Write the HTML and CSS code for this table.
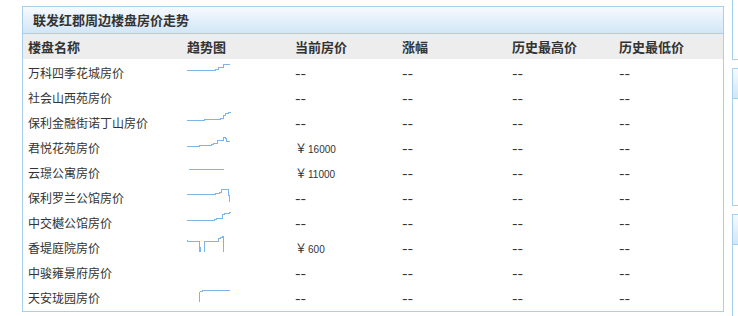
FILE: index.html
```html
<!DOCTYPE html>
<html lang="zh-CN">
<head>
<meta charset="utf-8">
<title>联发红郡周边楼盘房价走势</title>
<link rel="stylesheet" href="styles.css">
</head>
<body>
<div class="page">
  <section class="panel main">
    <div class="panel-head">联发红郡周边楼盘房价走势</div>
    <div class="row thead">
      <div class="c">楼盘名称</div>
      <div class="c">趋势图</div>
      <div class="c">当前房价</div>
      <div class="c">涨幅</div>
      <div class="c">历史最高价</div>
      <div class="c">历史最低价</div>
    </div>

    <div class="row">
      <div class="c">万科四季花城房价</div>
      <div class="spark"><svg width="46" height="25" viewBox="0 0 46 25"><polyline points="1,11.5 29,11.5 29,10.5 32,10.5 32,8.5 37.5,8.5 37.5,5.5 44,5.5"/></svg></div>
      <div class="c"><span class="dash">--</span></div><div class="c"><span class="dash">--</span></div><div class="c"><span class="dash">--</span></div><div class="c"><span class="dash">--</span></div>
    </div>

    <div class="row">
      <div class="c">社会山西苑房价</div>
      <div class="spark"></div>
      <div class="c"><span class="dash">--</span></div><div class="c"><span class="dash">--</span></div><div class="c"><span class="dash">--</span></div><div class="c"><span class="dash">--</span></div>
    </div>

    <div class="row">
      <div class="c">保利金融街诺丁山房价</div>
      <div class="spark"><svg width="46" height="25" viewBox="0 0 46 25"><polyline points="1,11.5 18,11.5 18,10.5 34,10.5 34,9.5 37,9.5 37,6.5 39,6.5 39,4.5 42,4.5 42,3.5 44,3.5 44,2.5"/></svg></div>
      <div class="c"><span class="dash">--</span></div><div class="c"><span class="dash">--</span></div><div class="c"><span class="dash">--</span></div><div class="c"><span class="dash">--</span></div>
    </div>

    <div class="row">
      <div class="c">君悦花苑房价</div>
      <div class="spark"><svg width="46" height="25" viewBox="0 0 46 25"><polyline points="1,12.5 13,12.5 13,11.5 25,11.5 25,10.5 27,10.5 27,9.5 31,9.5 31,6.5 37,6.5 37,3.5 39.5,3.5 39.5,4.5 40.5,4.5 40.5,7.5 44,7.5"/></svg></div>
      <div class="c">￥<span class="num">16000</span></div><div class="c"><span class="dash">--</span></div><div class="c"><span class="dash">--</span></div><div class="c"><span class="dash">--</span></div>
    </div>

    <div class="row">
      <div class="c">云璟公寓房价</div>
      <div class="spark"><svg width="46" height="25" viewBox="0 0 46 25"><polyline points="3,10.5 38,10.5"/></svg></div>
      <div class="c">￥<span class="num">11000</span></div><div class="c"><span class="dash">--</span></div><div class="c"><span class="dash">--</span></div><div class="c"><span class="dash">--</span></div>
    </div>

    <div class="row">
      <div class="c">保利罗兰公馆房价</div>
      <div class="spark"><svg width="46" height="25" viewBox="0 0 46 25"><polyline points="1,10.5 29,10.5 29,9.5 33,9.5 33,8.5 35,8.5 35,5.5 42.5,5.5 42.5,11 43.5,11 43.5,18"/></svg></div>
      <div class="c"><span class="dash">--</span></div><div class="c"><span class="dash">--</span></div><div class="c"><span class="dash">--</span></div><div class="c"><span class="dash">--</span></div>
    </div>

    <div class="row">
      <div class="c">中交樾公馆房价</div>
      <div class="spark"><svg width="46" height="25" viewBox="0 0 46 25"><polyline points="1,11.5 28,11.5 28,10.5 30,10.5 30,9.5 36,9.5 36,5.5 38,5.5 38,4.5 43,4.5 43,3.5 45,3.5"/></svg></div>
      <div class="c"><span class="dash">--</span></div><div class="c"><span class="dash">--</span></div><div class="c"><span class="dash">--</span></div><div class="c"><span class="dash">--</span></div>
    </div>

    <div class="row">
      <div class="c">香堤庭院房价</div>
      <div class="spark"><svg width="46" height="25" viewBox="0 0 46 25"><polyline points="1,6.5 2,7.5 13.5,7.5 13.5,17.5"/><polyline points="14.5,12.5 14.5,17.5"/><polyline points="18.5,17.5 18.5,7.5 32.5,7.5 32.5,4.5 34.5,4.5 34.5,3.5 36.5,3.5 36.5,2.5 37.5,2.5 37.5,17.5"/></svg></div>
      <div class="c">￥<span class="num">600</span></div><div class="c"><span class="dash">--</span></div><div class="c"><span class="dash">--</span></div><div class="c"><span class="dash">--</span></div>
    </div>

    <div class="row">
      <div class="c">中骏雍景府房价</div>
      <div class="spark"></div>
      <div class="c"><span class="dash">--</span></div><div class="c"><span class="dash">--</span></div><div class="c"><span class="dash">--</span></div><div class="c"><span class="dash">--</span></div>
    </div>

    <div class="row">
      <div class="c">天安珑园房价</div>
      <div class="spark"><svg width="46" height="25" viewBox="0 0 46 25"><polyline points="13.5,17.5 13.5,8.5 14.5,7.5 16.5,7.5 16.5,6.5 44,6.5"/></svg></div>
      <div class="c"><span class="dash">--</span></div><div class="c"><span class="dash">--</span></div><div class="c"><span class="dash">--</span></div><div class="c"><span class="dash">--</span></div>
    </div>
  </section>

  <aside class="side">
    <div class="panel side-a"></div>
    <div class="panel side-b"><div class="panel-head side-head"></div></div>
    <div class="panel side-c"><div class="panel-head side-head"></div></div>
  </aside>
</div>
</body>
</html>
```

FILE: styles.css
```css
html, body {
  margin: 0;
  padding: 0;
  background: #fff;
  overflow: hidden;
}

.page {
  width: 738px;
  height: 316px;
  overflow: hidden;
  display: flex;
  align-items: flex-start;
  gap: 8px;
  padding: 6px 0 0 22px;
  box-sizing: border-box;
  font-family: "Noto Sans CJK SC", "Liberation Sans", sans-serif;
  font-size: 12px;
  color: #333;
}

.panel {
  border: 1px solid #a9d0ea;
  background: #fff;
  box-sizing: border-box;
  flex: none;
}

.main {
  width: 702px;
  padding-bottom: 2px;
}

.panel-head {
  height: 26px;
  line-height: 26px;
  padding-left: 10px;
  border-bottom: 1px solid #a9d0ea;
  background: linear-gradient(to bottom, #f6fafe 0%, #e6f1fb 45%, #d2e6f6 100%);
  font-size: 13px;
  font-weight: bold;
  color: #333;
}

.row {
  display: grid;
  grid-template-columns: 159px 108px 107px 110px 107px 1fr;
  height: 25px;
  padding-left: 5px;
}

.row .c {
  padding-top: 3px;
  line-height: 22px;
  white-space: nowrap;
}

.thead {
  background: #ededed;
}

.thead .c {
  padding-top: 0;
  line-height: 25px;
  font-size: 13px;
  font-weight: bold;
  color: #333;
}

.dash {
  display: inline-block;
  font-family: "Liberation Sans", sans-serif;
  font-size: 12px;
  transform: scaleX(1.4);
  transform-origin: left center;
}

.num {
  font-family: "Liberation Sans", sans-serif;
  font-size: 10px;
  margin-left: 1px;
}

.spark svg {
  display: block;
  margin-left: -1px;
}

.spark polyline {
  fill: none;
  stroke: #7cb5ec;
  stroke-width: 1;
  shape-rendering: crispEdges;
}

.side {
  display: flex;
  flex-direction: column;
  gap: 8px;
  margin-top: -40px;
  flex: none;
  width: 200px;
}

.side-a {
  height: 94px;
}

.side-b {
  height: 138px;
}

.side-c {
  height: 200px;
}

.side-head {
  height: 29px;
}
```
